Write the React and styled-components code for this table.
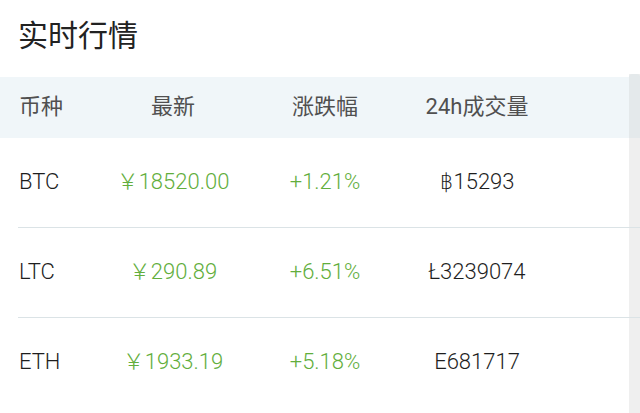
import React from 'react';
import styled, { createGlobalStyle } from 'styled-components';

const coins = [
  { symbol: 'BTC', price: '￥18520.00', change: '+1.21%', volume: '฿15293' },
  { symbol: 'LTC', price: '￥290.89', change: '+6.51%', volume: 'Ł3239074' },
  { symbol: 'ETH', price: '￥1933.19', change: '+5.18%', volume: 'E681717' },
];

const GlobalStyle = createGlobalStyle`
  html, body {
    margin: 0;
    padding: 0;
    background: #ffffff;
  }
  body {
    font-family: Roboto, "Noto Sans CJK SC", "DejaVu Sans", sans-serif;
  }
`;

const Page = styled.div`
  width: 640px;
  height: 413px;
  overflow: hidden;
  display: flex;
  flex-direction: column;
`;

const TitleBar = styled.div`
  height: 74px;
  padding: 11px 0 0 18px;
  box-sizing: border-box;
`;

const Title = styled.h1`
  margin: 0;
  font-family: "Noto Sans CJK SC", sans-serif;
  font-size: 30px;
  line-height: 44px;
  font-weight: 400;
  color: #222;
`;

const Body = styled.div`
  flex: 1;
  display: flex;
`;

const Table = styled.div`
  flex: 1;
  padding-top: 3px;
`;

const Scrollbar = styled.div`
  width: 11px;
  background: #efefef;
  display: flex;
  flex-direction: column;
`;

const Thumb = styled.div`
  height: 64px;
  background: #e4e9eb;
  border-radius: 3px 3px 0 0;
`;

const Row = styled.div`
  display: grid;
  grid-template-columns: 78px 152px 152px 152px 1fr;
  align-items: center;
  height: ${p => (p.$head ? '61px' : '90px')};
  padding-left: 19px;
  background: ${p => (p.$head ? '#f0f6f9' : 'transparent')};
  font-size: 22px;
  font-weight: ${p => (p.$head ? 400 : 300)};
  color: ${p => (p.$head ? '#505050' : '#1e1e1e')};
  position: relative;
  &::after {
    content: '';
    display: ${p => (p.$line ? 'block' : 'none')};
    position: absolute;
    left: 18px;
    right: -11px;
    bottom: 0;
    height: 1px;
    background: #dbe3e6;
  }
`;

const Cell = styled.div`
  text-align: ${p => (p.$left ? 'left' : 'center')};
  color: ${p => (p.$green ? '#62ae3c' : 'inherit')};
  line-height: 26px;
  margin-top: -2px;
  white-space: nowrap;
`;

export default function App() {
  return (
    <Page>
      <GlobalStyle />
      <TitleBar>
        <Title>实时行情</Title>
      </TitleBar>
      <Body>
        <Table>
          <Row $head>
            <Cell $left>币种</Cell>
            <Cell>最新</Cell>
            <Cell>涨跌幅</Cell>
            <Cell>24h成交量</Cell>
          </Row>
          {coins.map((c, i) => (
            <Row key={c.symbol} $line={i < coins.length - 1}>
              <Cell $left>{c.symbol}</Cell>
              <Cell $green>{c.price}</Cell>
              <Cell $green>{c.change}</Cell>
              <Cell>{c.volume}</Cell>
            </Row>
          ))}
        </Table>
        <Scrollbar>
          <Thumb />
        </Scrollbar>
      </Body>
    </Page>
  );
}
